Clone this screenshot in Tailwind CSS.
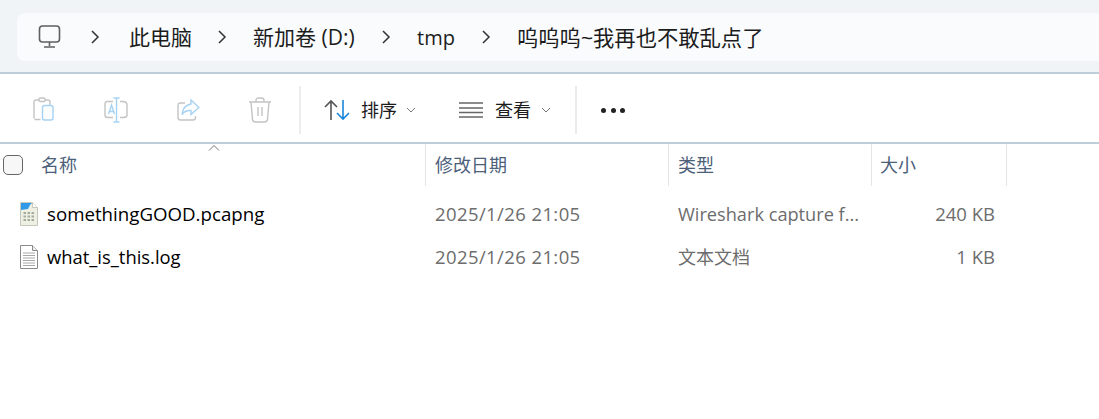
<!DOCTYPE html>
<html lang="zh">
  <head>
    <meta charset="UTF-8" />
    <title>资源管理器</title>
    <script src="https://cdn.jsdelivr.net/npm/@tailwindcss/browser@4"></script>
  </head>
  <body class="bg-white w-[1099px] h-[419px] overflow-hidden font-['Open_Sans','Noto_Sans_CJK_SC',sans-serif]">
    <!-- address bar -->
    <div class="h-[74px] bg-[#f0f4f7] border-b-2 border-[#bfcdd8] pt-[13px] pl-[17px]">
      <div class="h-[48px] bg-[#f9fbfd] rounded-l-lg flex items-center text-[21px] text-[#1c1c1c]">
        <svg class="ml-[20px] w-[26px] h-[26px]" viewBox="0 0 26 26" fill="none" stroke="#5f5f5f" stroke-width="1.6">
          <rect x="2.5" y="2" width="20" height="16" rx="3" />
          <path d="M12.5 18v4M7 23h11" />
        </svg>
        <svg class="ml-[27px] w-[10px] h-[14px]" viewBox="0 0 10 14" fill="none" stroke="#333" stroke-width="1.5"><path d="M2 1l6 6-6 6" /></svg>
        <span class="ml-[29px] pt-[2px]">此电脑</span>
        <svg class="ml-[25px] w-[10px] h-[14px]" viewBox="0 0 10 14" fill="none" stroke="#333" stroke-width="1.5"><path d="M2 1l6 6-6 6" /></svg>
        <span class="ml-[26px] pt-[2px]">新加卷 (D:)</span>
        <svg class="ml-[26px] w-[10px] h-[14px]" viewBox="0 0 10 14" fill="none" stroke="#333" stroke-width="1.5"><path d="M2 1l6 6-6 6" /></svg>
        <span class="ml-[26.500px] pt-[2px] text-[20px]">tmp</span>
        <svg class="ml-[26px] w-[10px] h-[14px]" viewBox="0 0 10 14" fill="none" stroke="#333" stroke-width="1.5"><path d="M2 1l6 6-6 6" /></svg>
        <span class="ml-[26px] pt-[2px] text-[21.3px]">呜呜呜~我再也不敢乱点了</span>
      </div>
    </div>

    <!-- toolbar -->
    <div class="h-[70px] border-b-2 border-[#bfcdd8] pt-[4px] flex items-center text-[18px] text-[#1c1c1c]">
      <svg class="ml-[31px] w-[24px] h-[26px]" viewBox="0 0 24 26" fill="none" stroke-width="1.4">
        <path d="M3 21.500V5q0-2 2-2h3m6 0h3q2 0 2 2v3M3.500 22.500h6" stroke="#c4c4c4" />
        <rect x="8" y="1" width="6" height="3.500" rx="1" stroke="#c4c4c4" />
        <rect x="11.500" y="8.500" width="10.500" height="14.500" rx="2" stroke="#a6d2f3" fill="#fbfdff" />
      </svg>
      <svg class="ml-[48px] w-[26px] h-[26px]" viewBox="0 0 26 26" fill="none" stroke-width="1.4">
        <path d="M10 4.500H4.500q-2.500 0-2.500 2.500v11q0 2.500 2.500 2.500H10M17 4.500h2.500Q24 4.500 24 8v10q0 2.500-3.500 2.500H17" stroke="#c4c4c4" />
        <path d="M13.500 1v24M10.500 1h6M10.500 25h6M5.500 17l3-9 3 9M6.500 14.500h4" stroke="#a6d2f3" />
      </svg>
      <svg class="ml-[47px] w-[24px] h-[24px]" viewBox="0 0 24 24" fill="none" stroke-width="1.4">
        <path d="M9 5H4.500Q2 5 2 7.500v12Q2 22 4.500 22H17q2.500 0 2.500-2.500V18" stroke="#c4c4c4" />
        <path d="M15 2l8 7.500-8 7v-4q-6-.5-9 4 1-9 9-10.500z" stroke="#a6d2f3" />
      </svg>
      <svg class="ml-[48px] w-[24px] h-[26px]" viewBox="0 0 24 26" fill="none" stroke="#c4c4c4" stroke-width="1.4">
        <path d="M1 5h22M8 5V3.500Q8 1 10.500 1h3Q16 1 16 3.500V5M3 5l1.500 17.500Q5 25 7.500 25h9q2.500 0 3-2.500L21 5M10 10v9M14 10v9" />
      </svg>
      <div class="ml-[27px] w-[2px] h-[48px] bg-[#ececec]"></div>

      <svg class="ml-[23px] w-[26px] h-[24px]" viewBox="0 0 26 24" fill="none" stroke-width="1.6">
        <path d="M7 22V3M1 9l6-6 6 6" stroke="#555" />
        <path d="M19 2v19M13 15l6 6 6-6" stroke="#1a86d9" />
      </svg>
      <span class="ml-[11px]">排序</span>
      <svg class="ml-[9px] w-[10px] h-[6px]" viewBox="0 0 10 6" fill="none" stroke="#777" stroke-width="1"><path d="M1 1l4 4 4-4" /></svg>
      <svg class="ml-[43px] w-[24px] h-[16px]" viewBox="0 0 24 16" fill="none" stroke="#666" stroke-width="1.500"><path d="M0 1h24M0 6h24M0 10.500h24M0 15h24" /></svg>
      <span class="ml-[12px]">查看</span>
      <svg class="ml-[10px] w-[10px] h-[6px]" viewBox="0 0 10 6" fill="none" stroke="#777" stroke-width="1"><path d="M1 1l4 4 4-4" /></svg>
      <div class="ml-[24px] w-[2px] h-[48px] bg-[#ececec]"></div>
      <div class="ml-[24px] flex gap-[4.5px]">
        <span class="w-[5px] h-[5px] rounded-full bg-[#222]"></span>
        <span class="w-[5px] h-[5px] rounded-full bg-[#222]"></span>
        <span class="w-[5px] h-[5px] rounded-full bg-[#222]"></span>
      </div>
    </div>

    <!-- column headers -->
    <div class="relative h-[42px] grid grid-cols-[426px_243px_203px_135px] text-[18px] text-[#4c607a]">
      <svg class="absolute left-[208px] top-[1px] w-[12px] h-[6px]" viewBox="0 0 12 6" fill="none" stroke="#777" stroke-width="1"><path d="M1 5.500l5-5 5 5" /></svg>
      <div class="border-r border-[#e3e5e7] flex items-center">
        <span class="ml-[3px] w-[20px] h-[20px] rounded-[5px] border border-[#666] bg-[#f7f7f7]"></span>
        <span class="ml-[18px]">名称</span>
      </div>
      <div class="border-r border-[#e3e5e7] flex items-center pl-[9px]">修改日期</div>
      <div class="border-r border-[#e3e5e7] flex items-center pl-[9px]">类型</div>
      <div class="border-r border-[#e3e5e7] flex items-center pl-[8px]">大小</div>
    </div>

    <!-- files -->
    <div class="pt-[7px] text-[18px] text-[#6d6d6d]">
      <div class="h-[43px] grid grid-cols-[426px_243px_203px_123px] items-center">
        <div class="flex items-center text-black">
          <svg class="ml-[20px] w-[18px] h-[24px]" viewBox="0 0 18 24">
            <path d="M.5.500h12l5 5v18H.500z" fill="#eef0e4" stroke="#c3c8ba" />
            <path d="M1 1h11l-2 2-2 4-7 1z" fill="#2f9be8" />
            <path d="M12.500.500v5h5" fill="#fff" stroke="#c3c8ba" />
            <path d="M3.500 11h2.500M7.500 11h2.500M11.500 11h2.500M3.500 14.500h2.500M7.500 14.500h2.500M11.500 14.500h2.500M3.500 18h2.500M7.500 18h2.500M11.500 18h2.500" stroke="#a5ab9b" stroke-width="2" />
          </svg>
          <span class="ml-[9px] text-[18.7px]">somethingGOOD.pcapng</span>
        </div>
        <div class="pl-[9px] pb-[2px] text-[18.5px] tracking-[0.4px]">2025/1/26 21:05</div>
        <div class="pl-[9px] text-[18.2px]">Wireshark capture f...</div>
        <div class="text-right pb-[2px] text-[18.5px]">240 KB</div>
      </div>
      <div class="h-[43px] grid grid-cols-[426px_243px_203px_123px] items-center">
        <div class="flex items-center text-black">
          <svg class="ml-[20px] w-[18px] h-[24px]" viewBox="0 0 18 24">
            <path d="M.5.500h12l5 5v18H.500z" fill="#fff" stroke="#8a8a8a" />
            <path d="M12.500.500v5h5" fill="#eee" stroke="#8a8a8a" />
            <path d="M3 8h12M3 10.500h12M3 13h12M3 15.500h12M3 18h12M3 20.500h12" stroke="#a8a8a8" />
          </svg>
          <span class="ml-[9px] pb-[2px] text-[18.4px]">what_is_this.log</span>
        </div>
        <div class="pl-[9px] pb-[2px] text-[18.5px] tracking-[0.4px]">2025/1/26 21:05</div>
        <div class="pl-[9px]">文本文档</div>
        <div class="text-right pb-[2px] text-[18.5px]">1 KB</div>
      </div>
    </div>
  </body>
</html>
